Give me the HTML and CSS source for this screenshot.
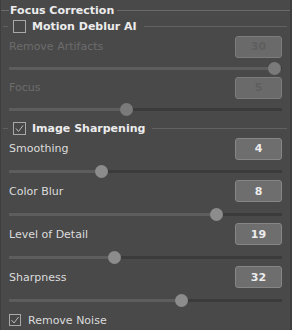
FILE: index.html
```html
<!DOCTYPE html>
<html>
<head>
<meta charset="utf-8">
<link rel="stylesheet" href="styles.css">
</head>
<body>
<div class="panel">
  <div class="legend legend-top">
    <span class="dash dash-top"></span>
    <span class="title">Focus Correction</span>
    <span class="rule"></span>
  </div>

  <div class="legend legend-sub first">
    <span class="dash"></span>
    <span class="cb"></span>
    <span class="title">Motion Deblur AI</span>
    <span class="rule rule-sub"></span>
  </div>
  <div class="row disabled">
    <span class="label">Remove Artifacts</span>
    <span class="val">30</span>
  </div>
  <div class="slider s1 disabled">
    <div class="track"><div class="fill" style="width:97.1%"></div><div class="thumb" style="left:97.1%"></div></div>
  </div>
  <div class="row disabled">
    <span class="label">Focus</span>
    <span class="val">5</span>
  </div>
  <div class="slider s1 disabled">
    <div class="track"><div class="fill" style="width:43.1%"></div><div class="thumb" style="left:43.1%"></div></div>
  </div>

  <div class="legend legend-sub second">
    <span class="dash"></span>
    <span class="cb checked"><svg viewBox="0 0 13 13" width="13" height="13"><path d="M3 6.5 L5.5 9.5 L10 3.5" fill="none" stroke="#b8b8b8" stroke-width="1"/></svg></span>
    <span class="title">Image Sharpening</span>
    <span class="rule rule-sub"></span>
  </div>
  <div class="row">
    <span class="label">Smoothing</span>
    <span class="val">4</span>
  </div>
  <div class="slider s2">
    <div class="track"><div class="fill" style="width:33.9%"></div><div class="thumb" style="left:33.9%"></div></div>
  </div>
  <div class="row">
    <span class="label">Color Blur</span>
    <span class="val">8</span>
  </div>
  <div class="slider s2">
    <div class="track"><div class="fill" style="width:75.9%"></div><div class="thumb" style="left:75.9%"></div></div>
  </div>
  <div class="row">
    <span class="label">Level of Detail</span>
    <span class="val">19</span>
  </div>
  <div class="slider s2">
    <div class="track"><div class="fill" style="width:38.7%"></div><div class="thumb" style="left:38.7%"></div></div>
  </div>
  <div class="row">
    <span class="label">Sharpness</span>
    <span class="val">32</span>
  </div>
  <div class="slider s2">
    <div class="track"><div class="fill" style="width:63.1%"></div><div class="thumb" style="left:63.1%"></div></div>
  </div>

  <div class="check-row">
    <span class="cb small checked"><svg viewBox="0 0 12 12" width="12" height="12"><path d="M2.5 6 L5 9 L9.5 3" fill="none" stroke="#b8b8b8" stroke-width="1"/></svg></span>
    <span class="label">Remove Noise</span>
  </div>
</div>
</body>
</html>
```

FILE: styles.css
```css
html, body {
  margin: 0;
  padding: 0;
  background: #484848;
}
.panel {
  width: 292px;
  height: 330px;
  box-sizing: border-box;
  background: #494949;
  border-left: 1px solid #3e3e3e;
  border-right: 2px solid #3f3f3f;
  font-family: "DejaVu Sans", Verdana, sans-serif;
  font-size: 11px;
  color: #dcdcdc;
  overflow: hidden;
  display: flex;
  flex-direction: column;
}
.legend {
  display: flex;
  align-items: center;
}
.legend-top {
  height: 16px;
  padding-top: 3px;
}
.legend-sub {
  height: 16px;
}
.legend-sub.second {
  margin-top: 3px;
}
.dash {
  width: 5px;
  height: 1px;
  margin-left: 2px;
  background: #606060;
}
.dash-top {
  width: 9px;
  margin-left: -1px;
  background: #6a6a6a;
}
.title {
  font-weight: bold;
  color: #ececec;
  margin-left: 1px;
  white-space: nowrap;
}
.legend-sub .title {
  margin-left: 6px;
}
.rule {
  flex: 1;
  height: 1px;
  margin-left: 3px;
  background: #6a6a6a;
}
.rule-sub {
  margin-left: 7px;
  margin-right: 3px;
  background: #626262;
}
.cb {
  width: 13px;
  height: 13px;
  box-sizing: border-box;
  margin-left: 5px;
  border: 1px solid #a8a8a8;
  background: #474747;
  display: flex;
  align-items: center;
  justify-content: center;
  position: relative;
}
.cb svg {
  position: absolute;
  left: -1px;
  top: -1px;
}
.cb.small {
  width: 12px;
  height: 12px;
  margin-left: 0;
}
.row {
  height: 22px;
  margin-top: 1px;
  display: flex;
  align-items: center;
  justify-content: space-between;
  padding: 0 8px 0 8px;
}
.legend-sub + .row {
  margin-top: 1px;
}
.slider + .row {
  margin-top: 0;
}
.label {
  color: #dcdcdc;
  white-space: nowrap;
}
.val {
  width: 47px;
  height: 22px;
  box-sizing: border-box;
  border: 1px solid #868686;
  border-radius: 3px;
  background: #6e6e6e;
  color: #ececec;
  font-weight: bold;
  display: flex;
  align-items: center;
  justify-content: center;
}
.disabled .label {
  color: #6c6c6c;
}
.disabled .val {
  background: #6a6a6a;
  border-color: #7c7c7c;
  color: #5e5e5e;
}
.slider {
  padding: 0 8px 0 8px;
  display: flex;
  align-items: center;
}
.slider.s1 {
  height: 19px;
  margin-top: 0;
}
.slider.s2 {
  height: 21px;
}
.slider .track {
  position: relative;
  flex: 1;
  height: 3px;
  margin-top: 3px;
  background: #3b3b3b;
}
.slider .fill {
  height: 3px;
  background: #5d5d5d;
}
.slider .thumb {
  position: absolute;
  top: 50%;
  width: 13px;
  height: 13px;
  margin-left: -6.5px;
  margin-top: -6.5px;
  border-radius: 50%;
  background: #8c8c8c;
}
.disabled .thumb {
  background: #7a7a7a;
}
.check-row {
  display: flex;
  align-items: center;
  height: 20px;
  padding-left: 8px;
  margin-top: 1px;
}
.check-row .label {
  margin-left: 7px;
}
```
